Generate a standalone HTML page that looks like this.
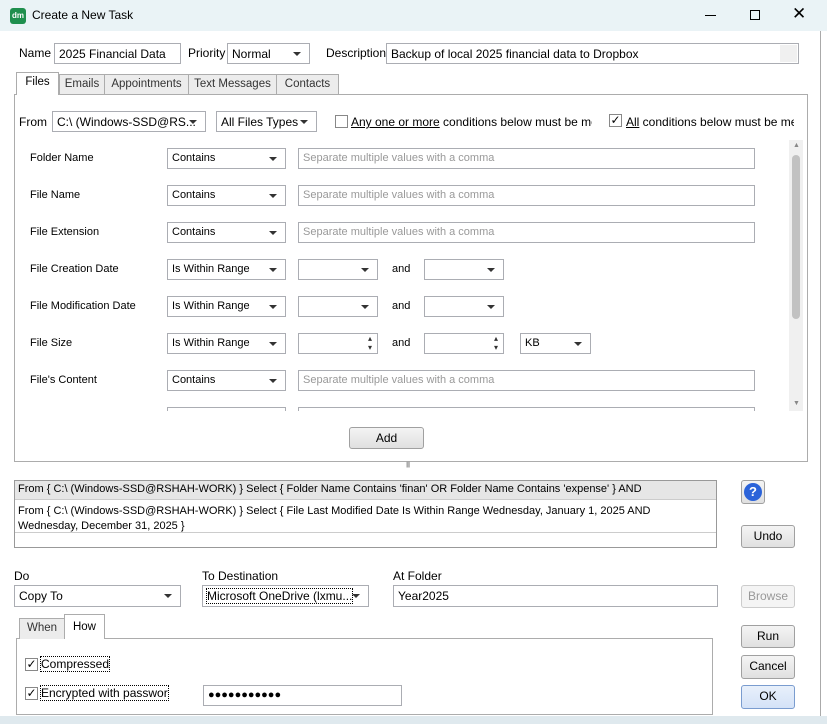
<!DOCTYPE html>
<html><head><style>
*{box-sizing:border-box;margin:0;padding:0}
body{width:827px;height:724px;background:#fff;font-family:"Liberation Sans",sans-serif;font-size:12px;color:#000;position:relative;overflow:hidden}
.a{position:absolute}
.box{position:absolute;border:1px solid #abadb3;background:#fff;height:21px;padding:3px 4px;white-space:nowrap;overflow:hidden}
.sel{padding-right:20px;text-overflow:clip}
.sel:after{content:"";position:absolute;right:8px;top:8px;border:4px solid transparent;border-top:4px solid #333;border-bottom:0}
.ph{color:#999;font-size:11px}
.lbl{position:absolute;font-size:11px}
.btn{position:absolute;border:1px solid #a0a0a0;border-radius:3px;background:linear-gradient(#f4f4f4,#e0e0e0);text-align:center;line-height:20px;font-size:12px}
.tab{position:absolute;border:1px solid #acacac;border-bottom:none;background:#ececec;text-align:center;line-height:19px;font-size:11.5px;color:#333}
.cb{position:absolute;width:13px;height:13px;border:1px solid #888;background:#fff;font-size:12px;line-height:11px;text-align:center}
.spin:after{content:"▴\A▾";white-space:pre;position:absolute;right:5px;top:0;font-size:8px;line-height:9px;color:#333}
</style></head><body>
<div class="a" style="left:0;top:0;width:827px;height:31px;background:#eaf3f6"></div>
<div class="a" style="left:10px;top:8px;width:16px;height:16px;background:#1f8f4e;border-radius:3px;color:#fff;font-size:8px;font-weight:bold;text-align:center;line-height:16px">dm</div>
<div class="a" style="left:32px;top:8px;font-size:12px">Create a New Task</div>
<div class="a" style="left:705px;top:15px;width:11px;height:1px;background:#000"></div>
<div class="a" style="left:750px;top:10px;width:10px;height:10px;border:1px solid #000"></div>
<div class="a" style="left:792px;top:4px;font-size:17px">✕</div>
<div class="a" style="left:820px;top:31px;width:1px;height:693px;background:#aaa"></div>

<div class="a" style="left:19px;top:46px">Name</div>
<div class="box" style="left:54px;top:43px;width:127px">2025 Financial Data</div>
<div class="a" style="left:188px;top:46px">Priority</div>
<div class="box sel" style="left:227px;top:43px;width:83px">Normal</div>
<div class="a" style="left:326px;top:46px">Description</div>
<div class="box" style="left:386px;top:43px;width:413px">Backup of local 2025 financial data to Dropbox</div>
<div class="a" style="left:780px;top:45px;width:17px;height:17px;background:#f0f0f0"></div>

<div class="a" style="left:14px;top:94px;width:794px;height:368px;border:1px solid #acacac"></div>
<div class="tab" style="left:59px;top:74px;width:46px">Emails</div>
<div class="tab" style="left:104px;top:74px;width:85px">Appointments</div>
<div class="tab" style="left:188px;top:74px;width:89px">Text Messages</div>
<div class="tab" style="left:276px;top:74px;width:63px">Contacts</div>
<div class="tab" style="left:16px;top:72px;width:43px;height:23px;background:#fff;color:#000">Files</div>

<div class="a" style="left:19px;top:115px">From</div>
<div class="box sel" style="left:52px;top:111px;width:154px">C:\ (Windows-SSD@RS...</div>
<div class="box sel" style="left:216px;top:111px;width:101px">All Files Types</div>
<div class="cb" style="left:335px;top:115px"></div>
<div class="a" style="left:351px;top:115px;width:241px;overflow:hidden;white-space:nowrap"><u>Any one or more</u> conditions below must be met</div>
<div class="cb" style="left:609px;top:114px">✓</div>
<div class="a" style="left:626px;top:115px;width:168px;overflow:hidden;white-space:nowrap"><u>All</u> conditions below must be met</div>

<div class="a" style="left:20px;top:140px;width:768px;height:271px;overflow:hidden">
 <div class="lbl" style="left:10px;top:12px">Folder Name</div>
 <div class="box sel ph" style="left:147px;top:8px;width:119px;color:#000">Contains</div>
 <div class="box ph" style="left:278px;top:8px;width:457px">Separate multiple values with a comma</div>
 <div class="lbl" style="left:10px;top:49px">File Name</div>
 <div class="box sel ph" style="left:147px;top:45px;width:119px;color:#000">Contains</div>
 <div class="box ph" style="left:278px;top:45px;width:457px">Separate multiple values with a comma</div>
 <div class="lbl" style="left:10px;top:86px">File Extension</div>
 <div class="box sel ph" style="left:147px;top:82px;width:119px;color:#000">Contains</div>
 <div class="box ph" style="left:278px;top:82px;width:457px">Separate multiple values with a comma</div>
 <div class="lbl" style="left:10px;top:123px">File Creation Date</div>
 <div class="box sel ph" style="left:147px;top:119px;width:119px;color:#000">Is Within Range</div>
 <div class="box sel" style="left:278px;top:119px;width:80px"></div>
 <div class="lbl" style="left:372px;top:123px">and</div>
 <div class="box sel" style="left:404px;top:119px;width:80px"></div>
 <div class="lbl" style="left:10px;top:160px">File Modification Date</div>
 <div class="box sel ph" style="left:147px;top:156px;width:119px;color:#000">Is Within Range</div>
 <div class="box sel" style="left:278px;top:156px;width:80px"></div>
 <div class="lbl" style="left:372px;top:160px">and</div>
 <div class="box sel" style="left:404px;top:156px;width:80px"></div>
 <div class="lbl" style="left:10px;top:197px">File Size</div>
 <div class="box sel ph" style="left:147px;top:193px;width:119px;color:#000">Is Within Range</div>
 <div class="box spin" style="left:278px;top:193px;width:80px"></div>
 <div class="lbl" style="left:372px;top:197px">and</div>
 <div class="box spin" style="left:404px;top:193px;width:80px"></div>
 <div class="box sel ph" style="left:500px;top:193px;width:71px;color:#000">KB</div>
 <div class="lbl" style="left:10px;top:234px">File's Content</div>
 <div class="box sel ph" style="left:147px;top:230px;width:119px;color:#000">Contains</div>
 <div class="box ph" style="left:278px;top:230px;width:457px">Separate multiple values with a comma</div>
 <div class="box" style="left:147px;top:267px;width:119px"></div>
 <div class="box" style="left:278px;top:267px;width:457px"></div>
</div>
<div class="a" style="left:789px;top:140px;width:14px;height:271px;background:#f0f0f0"></div>
<div class="a" style="left:792px;top:155px;width:8px;height:164px;background:#c2c2c2;border-radius:4px"></div>
<div class="a" style="left:793px;top:142px;font-size:7px;color:#888">▲</div>
<div class="a" style="left:793px;top:400px;font-size:7px;color:#888">▼</div>
<div class="btn" style="left:349px;top:427px;width:75px;height:22px">Add</div>
<div class="a" style="left:406px;top:462px;font-size:6px;color:#999;letter-spacing:-1px">||||||</div>

<div class="a" style="left:14px;top:480px;width:703px;height:68px;border:1px solid #999;background:#fff"></div>
<div class="a" style="left:15px;top:481px;width:701px;height:19px;background:#e6e6e6;border-bottom:1px solid #ccc;font-size:11px;padding:2px 3px;white-space:nowrap">From { C:\ (Windows-SSD@RSHAH-WORK) } Select { Folder Name Contains 'finan' OR Folder Name Contains 'expense' } AND</div>
<div class="a" style="left:15px;top:500px;width:701px;height:33px;border-bottom:1px solid #ccc;font-size:11px;padding:4px 3px;line-height:15px">From { C:\ (Windows-SSD@RSHAH-WORK) } Select { File Last Modified Date Is Within Range Wednesday, January 1, 2025 AND Wednesday, December 31, 2025 }</div>
<div class="btn" style="left:741px;top:480px;width:24px;height:24px;padding-top:2px"><div style="width:18px;height:18px;margin:0 auto;border-radius:50%;background:#2b63d9;color:#fff;font-weight:bold;line-height:18px;font-size:13px">?</div></div>
<div class="btn" style="left:741px;top:525px;width:54px;height:23px">Undo</div>

<div class="a" style="left:14px;top:569px">Do</div>
<div class="box sel" style="left:14px;top:585px;width:167px;height:22px">Copy To</div>
<div class="a" style="left:202px;top:569px">To Destination</div>
<div class="box sel" style="left:202px;top:585px;width:167px;height:22px"><span style="outline:1px dotted #000">Microsoft OneDrive (lxmu...</span></div>
<div class="a" style="left:393px;top:569px">At Folder</div>
<div class="box" style="left:393px;top:585px;width:325px;height:22px">Year2025</div>
<div class="btn" style="left:741px;top:585px;width:54px;height:23px;color:#999;border-color:#ccc;background:#f4f4f4">Browse</div>

<div class="a" style="left:16px;top:638px;width:697px;height:77px;border:1px solid #acacac"></div>
<div class="tab" style="left:19px;top:618px;width:46px;height:21px">When</div>
<div class="tab" style="left:64px;top:614px;width:41px;height:25px;background:#fff;color:#000;line-height:25px">How</div>
<div class="cb" style="left:25px;top:658px">✓</div>
<div class="a" style="left:41px;top:657px;outline:1px dotted #000">Compressed</div>
<div class="cb" style="left:25px;top:687px">✓</div>
<div class="a" style="left:41px;top:686px;width:127px;overflow:hidden;white-space:nowrap;outline:1px dotted #000">Encrypted with password</div>
<div class="box" style="left:203px;top:685px;width:199px;font-size:11px;line-height:13px;padding-top:3px">●●●●●●●●●●●</div>
<div class="btn" style="left:741px;top:625px;width:54px;height:23px">Run</div>
<div class="btn" style="left:741px;top:655px;width:54px;height:24px">Cancel</div>
<div class="btn" style="left:741px;top:685px;width:54px;height:24px;background:linear-gradient(#e8f0fb,#d4e2f7);border-color:#7a9ccf">OK</div>
<div class="a" style="left:0;top:716px;width:827px;height:8px;background:#dfe9ee"></div>
</body></html>
